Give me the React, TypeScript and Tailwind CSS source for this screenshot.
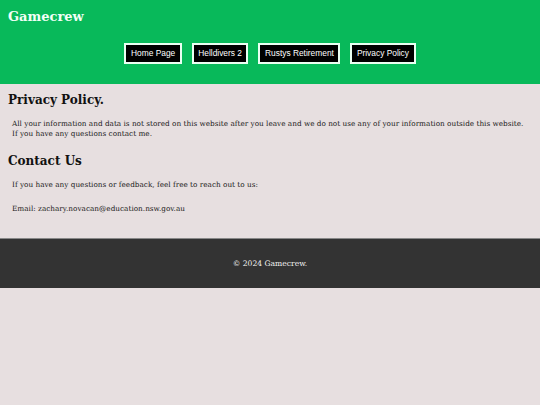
export default function App() {
  const links = ["Home Page", "Helldivers 2", "Rustys Retirement", "Privacy Policy"];
  return (
    <div className="min-h-[405px] bg-[#e7dfe0] font-['DejaVu_Serif',serif] text-[#1a1a1a]">
      <header className="h-[84px] bg-[#08b95a] px-2 pt-[9px]">
        <h1 className="text-[13px] leading-[16px] font-bold text-[#f2fff6]">Gamecrew</h1>
        <nav className="mt-[18px] flex justify-center gap-[10px]">
          {links.map((l) => (
            <a
              key={l}
              className="flex h-[21px] items-center border-2 border-[#eafff2] bg-black px-[4.5px] font-['Liberation_Sans',sans-serif] text-[8.4px] text-white"
            >
              {l}
            </a>
          ))}
        </nav>
      </header>
      <main className="px-2 pt-[9px]">
        <h2 className="text-[12px] leading-[15px] font-bold text-[#111]">Privacy Policy.</h2>
        <p className="mt-[11px] px-1 text-[7.3px] leading-[9.5px]">
          All your information and data is not stored on this website after you leave and we do not use any of your
          information outside this website. If you have any questions contact me.
        </p>
        <h2 className="mt-[16px] text-[12px] leading-[15px] font-bold text-[#111]">Contact Us</h2>
        <p className="mt-[11px] px-1 text-[7.3px] leading-[10px]">
          If you have any questions or feedback, feel free to reach out to us:
        </p>
        <p className="mt-[14px] px-1 text-[7.3px] leading-[10px]">Email: zachary.novacan@education.nsw.gov.au</p>
      </main>
      <footer className="mt-[24px] flex h-[50px] items-center justify-center border-t border-[#888] bg-[#333] text-[7.6px] text-[#f4f4f4]">
        © 2024 Gamecrew.
      </footer>
    </div>
  );
}
